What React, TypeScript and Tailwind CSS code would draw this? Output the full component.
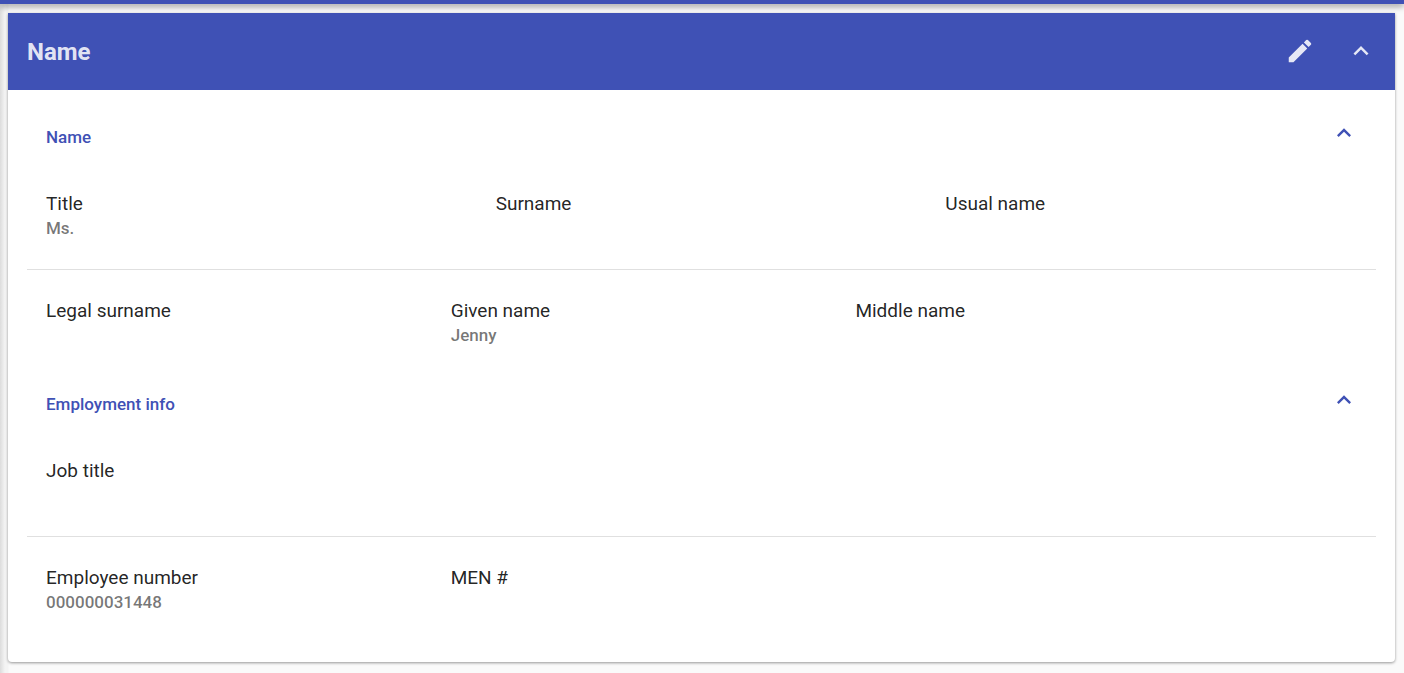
import { useState, type ReactNode } from "react";

type FieldData = { label: string; value?: string };

function Chevron({ open, className }: { open: boolean; className: string }) {
  return (
    <svg viewBox="0 0 24 24" className={className} fill="currentColor" aria-hidden="true">
      {open ? (
        <path d="M12 8l-6 6 1.41 1.41L12 10.83l4.59 4.58L18 14z" />
      ) : (
        <path d="M16.59 8.59L12 13.17 7.41 8.59 6 10l6 6 6-6z" />
      )}
    </svg>
  );
}

function Field({ label, value }: FieldData) {
  return (
    <div className="min-w-0 px-[19px]">
      <dt className="text-[19px] leading-[27px] text-black/87">{label}</dt>
      <dd className="h-[22px] text-[17px] leading-[22px] font-medium text-black/54">{value}</dd>
    </div>
  );
}

function Section({ title, children }: { title: string; children: ReactNode }) {
  const [open, setOpen] = useState(true);
  return (
    <section>
      <div className="flex h-[60px] items-center justify-between pr-[18px] pl-[19px]">
        <h2 className="text-[17px] leading-6 font-medium text-[#3f51b5]">{title}</h2>
        <button
          type="button"
          aria-label={`Toggle ${title}`}
          aria-expanded={open}
          onClick={() => setOpen(!open)}
          className="mb-2 text-[#3f51b5]"
        >
          <Chevron open={open} className="size-7" />
        </button>
      </div>
      {open && children}
    </section>
  );
}

const topRow = "grid grid-cols-3 border-b border-black/12 pt-[23px] pb-[30px]";
const bottomRow = "grid grid-cols-[30%_30%_30%] pt-[27px] pb-[28px]";

export default function App() {
  const [open, setOpen] = useState(true);
  return (
    <div className="min-h-screen bg-[#fafafa] bg-[linear-gradient(to_right,#dcdcdc,#f4f4f4_5px,#f4f4f4_8px,#fafafa_9px)] pb-2.5 font-[Roboto,sans-serif]">
      <div className="h-1 bg-[#3f51b5] shadow-[0_2px_6px_rgba(0,0,0,0.5)]" />
      <main className="mt-[9px] mr-[9px] ml-2 rounded-b bg-white shadow-[0_1px_3px_rgba(0,0,0,0.4)]">
        <header className="flex h-[77px] items-center justify-between bg-[#3f51b5] px-[19px] text-white/87">
          <h1 className="text-2xl font-bold">Name</h1>
          <div className="mb-0.5 flex items-center gap-[31px]">
            <button type="button" aria-label="Edit">
              <svg viewBox="0 0 24 24" className="size-[30px]" fill="currentColor" aria-hidden="true">
                <path d="M3 17.25V21h3.75L17.81 9.94l-3.75-3.75L3 17.25zM20.71 7.04a1 1 0 0 0 0-1.41l-2.34-2.34a1 1 0 0 0-1.41 0l-1.83 1.83 3.75 3.75 1.83-1.83z" />
              </svg>
            </button>
            <button type="button" aria-label="Toggle Name" aria-expanded={open} onClick={() => setOpen(!open)}>
              <Chevron open={open} className="size-[30px]" />
            </button>
          </div>
        </header>
        {open && (
          <div className="px-[19px] pt-[17px] pb-[21px]">
            <Section title="Name">
              <dl className={topRow}>
                <Field label="Title" value="Ms." />
                <Field label="Surname" />
                <Field label="Usual name" />
              </dl>
              <dl className={bottomRow}>
                <Field label="Legal surname" />
                <Field label="Given name" value="Jenny" />
                <Field label="Middle name" />
              </dl>
            </Section>
            <Section title="Employment info">
              <dl className={topRow}>
                <Field label="Job title" />
              </dl>
              <dl className={bottomRow}>
                <Field label="Employee number" value="000000031448" />
                <Field label="MEN #" />
              </dl>
            </Section>
          </div>
        )}
      </main>
    </div>
  );
}
